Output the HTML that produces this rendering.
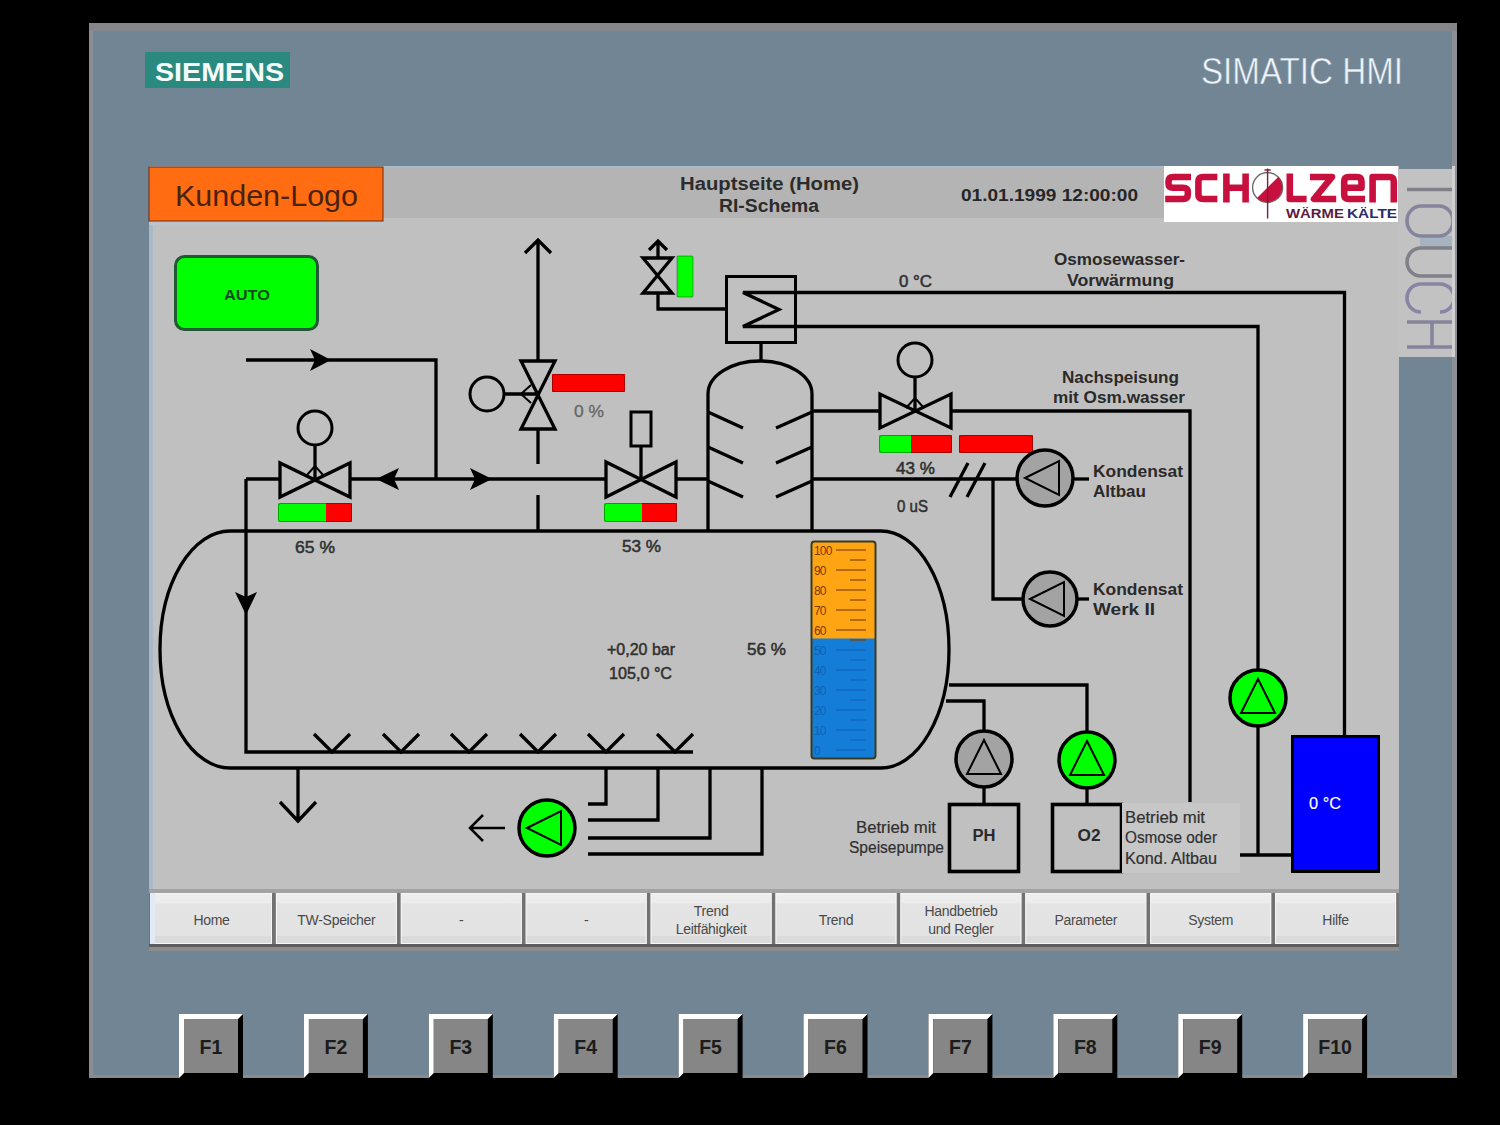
<!DOCTYPE html><html><head><meta charset="utf-8"><style>html,body{margin:0;padding:0;background:#000;width:1500px;height:1125px;overflow:hidden}svg{display:block}text{font-family:"Liberation Sans",sans-serif}</style></head><body>
<svg width="1500" height="1125" viewBox="0 0 1500 1125">
<defs><linearGradient id="btn" x1="0" y1="0" x2="0" y2="1"><stop offset="0" stop-color="#eeeeee"/><stop offset="0.2" stop-color="#ececec"/><stop offset="0.21" stop-color="#e4e4e4"/><stop offset="0.84" stop-color="#e3e3e3"/><stop offset="0.85" stop-color="#dbdbdb"/><stop offset="1" stop-color="#dadada"/></linearGradient></defs>
<rect x="0" y="0" width="1500" height="1125" fill="#000"/>
<rect x="89" y="23" width="1368" height="1055" fill="#718595"/>
<rect x="89" y="23" width="4" height="1055" fill="#8a8e92"/>
<rect x="1452" y="23" width="5" height="1055" fill="#8c9094"/>
<rect x="89" y="23" width="1368" height="8" fill="#85858c"/>
<rect x="89" y="1075" width="1368" height="3" fill="#8a8a8a"/>
<rect x="145" y="52" width="145" height="36" fill="#2b8a80"/>
<text x="155" y="81" font-size="26.5" font-weight="bold" fill="#f4fbfb" textLength="129" lengthAdjust="spacingAndGlyphs">SIEMENS</text>
<text x="1201" y="83.5" font-size="37" fill="#eef3f8" textLength="202" lengthAdjust="spacingAndGlyphs" stroke="#718595" stroke-width="0.5">SIMATIC HMI</text>
<rect x="149" y="166" width="1250" height="727" fill="#c0c0c0"/>
<rect x="149" y="218" width="4" height="675" fill="#a9b9c9"/>
<rect x="383" y="166" width="781" height="52" fill="#b4b4b4"/>
<rect x="383" y="166" width="781" height="2" fill="#a8bccc"/>
<rect x="149" y="221" width="236" height="4" fill="#b9c4cc"/>
<rect x="149" y="167" width="234" height="54" fill="#ff6c12" stroke="#6a2a10" stroke-width="1"/>
<text x="175" y="206" font-size="30" fill="#4a2212" textLength="183" lengthAdjust="spacingAndGlyphs">Kunden-Logo</text>
<text x="680" y="189.5" font-size="17.5" font-weight="bold" fill="#2c2c2c" textLength="179" lengthAdjust="spacingAndGlyphs">Hauptseite (Home)</text>
<text x="719" y="212" font-size="17.5" font-weight="bold" fill="#2c2c2c" textLength="100" lengthAdjust="spacingAndGlyphs">RI-Schema</text>
<text x="961" y="200.5" font-size="16.5" font-weight="bold" fill="#262626" textLength="177" lengthAdjust="spacingAndGlyphs">01.01.1999 12:00:00</text>
<rect x="1164" y="166" width="234" height="56" fill="#ffffff"/>
<g id="scholzen" fill="none" stroke="#c8103e" stroke-width="6.6" stroke-linejoin="round">
<path d="M1191,177 H1173 Q1168.5,177 1168.5,181.5 V183.5 Q1168.5,187.8 1173,187.8 H1183 Q1187.8,187.8 1187.8,192 V194.5 Q1187.8,199 1183,199 H1165.2"/>
<path d="M1217.4,177 H1203 Q1198.4,177 1198.4,181.5 V194.5 Q1198.4,199 1203,199 H1217.4"/>
<path d="M1226.4,173.4 V202.4 M1245.6,173.4 V202.4 M1226.4,187.8 H1245.6"/>
<path d="M1289.8,173.4 V199 H1306.6"/>
<path d="M1310,177 H1332 L1314,199 H1336.2"/>
<path d="M1344.2,187.8 H1361.5 V181.5 Q1361.5,177 1357,177 H1348.7 Q1344.2,177 1344.2,181.5 V194.5 Q1344.2,199 1348.7,199 H1365"/>
<path d="M1372.6,202.4 V177 H1389.5 Q1393.8,177 1393.8,181.5 V202.4"/>
</g>
<circle cx="1267.6" cy="187.5" r="15" fill="#fff" stroke="#6a6a6a" stroke-width="1.4"/>
<path d="M1278.2,176.9 A15,15 0 0 1 1257,198.1 Z" fill="#c8103e"/>
<path d="M1267.6,168.5 V218.5 M1264.5,170 H1270.7" stroke="#7a2035" stroke-width="1.4"/>
<text x="1286" y="218.3" font-size="13.5" font-weight="bold" fill="#5e1c3c" textLength="58" lengthAdjust="spacingAndGlyphs">WÄRME</text>
<text x="1347" y="218.3" font-size="13.5" font-weight="bold" fill="#2c2c66" textLength="50" lengthAdjust="spacingAndGlyphs">KÄLTE</text>
<rect x="1399" y="169" width="56" height="188" fill="#c2c2c2"/>
<rect x="1420" y="236" width="32" height="12" fill="#94a8bc" opacity="0.6"/>
<g fill="none" stroke="#808088" stroke-width="3.6">
<path d="M1407,189.5 H1452"/>
<path d="M1421,206 H1439 A14,15 0 0 1 1439,236 H1421 A14,15 0 0 1 1421,206 Z" stroke="#86849c"/>
<path d="M1452,248 H1421 A14,14 0 0 0 1421,276 H1452"/>
<path d="M1440,312 A14,14 0 0 0 1440,284 H1421 A14,14 0 0 0 1421,312" stroke="#8884a4"/>
<path d="M1407,322 H1452 M1407,347 H1452 M1432,322 V347" stroke="#86849c"/>
</g>
<rect x="1452" y="166" width="3" height="191" fill="#d0d0d0"/>
<rect x="149" y="889" width="1250" height="4" fill="#a2a2a2"/>
<rect x="149" y="893" width="1250" height="51" fill="#727272"/>
<rect x="149" y="944" width="1250" height="3" fill="#5c5c5c"/>
<rect x="149" y="947" width="1250" height="4" fill="#8c8c8c"/>
<rect x="151.0" y="893" width="121" height="51" fill="url(#btn)"/>
<rect x="151.5" y="893.5" width="120" height="50" fill="none" stroke="#f6f6f6" stroke-width="1"/>
<text x="211.5" y="925" font-size="14" fill="#4a4a4a" text-anchor="middle" letter-spacing="-0.3">Home</text>
<rect x="275.9" y="893" width="121" height="51" fill="url(#btn)"/>
<rect x="276.4" y="893.5" width="120" height="50" fill="none" stroke="#f6f6f6" stroke-width="1"/>
<text x="336.4" y="925" font-size="14" fill="#4a4a4a" text-anchor="middle" letter-spacing="-0.3">TW-Speicher</text>
<rect x="400.8" y="893" width="121" height="51" fill="url(#btn)"/>
<rect x="401.3" y="893.5" width="120" height="50" fill="none" stroke="#f6f6f6" stroke-width="1"/>
<text x="461.3" y="925" font-size="14" fill="#4a4a4a" text-anchor="middle" letter-spacing="-0.3">-</text>
<rect x="525.7" y="893" width="121" height="51" fill="url(#btn)"/>
<rect x="526.2" y="893.5" width="120" height="50" fill="none" stroke="#f6f6f6" stroke-width="1"/>
<text x="586.2" y="925" font-size="14" fill="#4a4a4a" text-anchor="middle" letter-spacing="-0.3">-</text>
<rect x="650.6" y="893" width="121" height="51" fill="url(#btn)"/>
<rect x="651.1" y="893.5" width="120" height="50" fill="none" stroke="#f6f6f6" stroke-width="1"/>
<text x="711.1" y="916" font-size="14" fill="#4a4a4a" text-anchor="middle" letter-spacing="-0.3">Trend</text>
<text x="711.1" y="934" font-size="14" fill="#4a4a4a" text-anchor="middle" letter-spacing="-0.3">Leitfähigkeit</text>
<rect x="775.5" y="893" width="121" height="51" fill="url(#btn)"/>
<rect x="776.0" y="893.5" width="120" height="50" fill="none" stroke="#f6f6f6" stroke-width="1"/>
<text x="836.0" y="925" font-size="14" fill="#4a4a4a" text-anchor="middle" letter-spacing="-0.3">Trend</text>
<rect x="900.4" y="893" width="121" height="51" fill="url(#btn)"/>
<rect x="900.9" y="893.5" width="120" height="50" fill="none" stroke="#f6f6f6" stroke-width="1"/>
<text x="960.9000000000001" y="916" font-size="14" fill="#4a4a4a" text-anchor="middle" letter-spacing="-0.3">Handbetrieb</text>
<text x="960.9000000000001" y="934" font-size="14" fill="#4a4a4a" text-anchor="middle" letter-spacing="-0.3">und Regler</text>
<rect x="1025.3" y="893" width="121" height="51" fill="url(#btn)"/>
<rect x="1025.8" y="893.5" width="120" height="50" fill="none" stroke="#f6f6f6" stroke-width="1"/>
<text x="1085.8000000000002" y="925" font-size="14" fill="#4a4a4a" text-anchor="middle" letter-spacing="-0.3">Parameter</text>
<rect x="1150.2" y="893" width="121" height="51" fill="url(#btn)"/>
<rect x="1150.7" y="893.5" width="120" height="50" fill="none" stroke="#f6f6f6" stroke-width="1"/>
<text x="1210.7" y="925" font-size="14" fill="#4a4a4a" text-anchor="middle" letter-spacing="-0.3">System</text>
<rect x="1275.1" y="893" width="121" height="51" fill="url(#btn)"/>
<rect x="1275.6" y="893.5" width="120" height="50" fill="none" stroke="#f6f6f6" stroke-width="1"/>
<text x="1335.6000000000001" y="925" font-size="14" fill="#4a4a4a" text-anchor="middle" letter-spacing="-0.3">Hilfe</text>
<rect x="150" y="893" width="5" height="51" fill="#e2eaf4"/>
<g transform="translate(179.0,1014)"><rect x="0" y="0" width="64" height="64" fill="#000"/><path d="M0,0 H64 L59,5 H5 V59 L0,64 Z" fill="#fff"/><rect x="5" y="5" width="54" height="54" fill="#868686"/></g>
<text x="211.0" y="1053.5" font-size="19.5" font-weight="bold" fill="#1c1c1c" text-anchor="middle">F1</text>
<g transform="translate(303.9,1014)"><rect x="0" y="0" width="64" height="64" fill="#000"/><path d="M0,0 H64 L59,5 H5 V59 L0,64 Z" fill="#fff"/><rect x="5" y="5" width="54" height="54" fill="#868686"/></g>
<text x="335.9" y="1053.5" font-size="19.5" font-weight="bold" fill="#1c1c1c" text-anchor="middle">F2</text>
<g transform="translate(428.8,1014)"><rect x="0" y="0" width="64" height="64" fill="#000"/><path d="M0,0 H64 L59,5 H5 V59 L0,64 Z" fill="#fff"/><rect x="5" y="5" width="54" height="54" fill="#868686"/></g>
<text x="460.8" y="1053.5" font-size="19.5" font-weight="bold" fill="#1c1c1c" text-anchor="middle">F3</text>
<g transform="translate(553.7,1014)"><rect x="0" y="0" width="64" height="64" fill="#000"/><path d="M0,0 H64 L59,5 H5 V59 L0,64 Z" fill="#fff"/><rect x="5" y="5" width="54" height="54" fill="#868686"/></g>
<text x="585.7" y="1053.5" font-size="19.5" font-weight="bold" fill="#1c1c1c" text-anchor="middle">F4</text>
<g transform="translate(678.6,1014)"><rect x="0" y="0" width="64" height="64" fill="#000"/><path d="M0,0 H64 L59,5 H5 V59 L0,64 Z" fill="#fff"/><rect x="5" y="5" width="54" height="54" fill="#868686"/></g>
<text x="710.6" y="1053.5" font-size="19.5" font-weight="bold" fill="#1c1c1c" text-anchor="middle">F5</text>
<g transform="translate(803.5,1014)"><rect x="0" y="0" width="64" height="64" fill="#000"/><path d="M0,0 H64 L59,5 H5 V59 L0,64 Z" fill="#fff"/><rect x="5" y="5" width="54" height="54" fill="#868686"/></g>
<text x="835.5" y="1053.5" font-size="19.5" font-weight="bold" fill="#1c1c1c" text-anchor="middle">F6</text>
<g transform="translate(928.4,1014)"><rect x="0" y="0" width="64" height="64" fill="#000"/><path d="M0,0 H64 L59,5 H5 V59 L0,64 Z" fill="#fff"/><rect x="5" y="5" width="54" height="54" fill="#868686"/></g>
<text x="960.4000000000001" y="1053.5" font-size="19.5" font-weight="bold" fill="#1c1c1c" text-anchor="middle">F7</text>
<g transform="translate(1053.3,1014)"><rect x="0" y="0" width="64" height="64" fill="#000"/><path d="M0,0 H64 L59,5 H5 V59 L0,64 Z" fill="#fff"/><rect x="5" y="5" width="54" height="54" fill="#868686"/></g>
<text x="1085.3000000000002" y="1053.5" font-size="19.5" font-weight="bold" fill="#1c1c1c" text-anchor="middle">F8</text>
<g transform="translate(1178.2,1014)"><rect x="0" y="0" width="64" height="64" fill="#000"/><path d="M0,0 H64 L59,5 H5 V59 L0,64 Z" fill="#fff"/><rect x="5" y="5" width="54" height="54" fill="#868686"/></g>
<text x="1210.2" y="1053.5" font-size="19.5" font-weight="bold" fill="#1c1c1c" text-anchor="middle">F9</text>
<g transform="translate(1303.1,1014)"><rect x="0" y="0" width="64" height="64" fill="#000"/><path d="M0,0 H64 L59,5 H5 V59 L0,64 Z" fill="#fff"/><rect x="5" y="5" width="54" height="54" fill="#868686"/></g>
<text x="1335.1000000000001" y="1053.5" font-size="19.5" font-weight="bold" fill="#1c1c1c" text-anchor="middle">F10</text>
<g stroke-linecap="butt" stroke-linejoin="miter">
<rect x="175.5" y="256.5" width="142" height="73" rx="9" fill="#00ff00" stroke="#1f5a32" stroke-width="3"/>
<text x="224" y="300" font-size="14.5" font-weight="bold" fill="#124a22" textLength="46" lengthAdjust="spacingAndGlyphs">AUTO</text>
<path d="M246,360 H436 V479" fill="none" stroke="#000" stroke-width="3.3"/>
<path d="M331,360 L310,349 L315,360 L310,371 Z" fill="#000"/>
<path d="M246,479 H280 M350,479 H606 M676,479 H708" fill="none" stroke="#000" stroke-width="3.3"/>
<path d="M280,463 L280,497 L350,463 L350,497 Z" fill="none" stroke="#000" stroke-width="3.3"/>
<circle cx="315" cy="428" r="17" fill="none" stroke="#000" stroke-width="3"/>
<path d="M315,445 V479" fill="none" stroke="#000" stroke-width="3.3"/>
<path d="M306,476 L315,466 L324,476" fill="none" stroke="#000" stroke-width="2"/>
<path d="M376,479 L399,468 L394,479 L399,490 Z" fill="#000"/>
<path d="M492,479 L470,468 L475,479 L470,490 Z" fill="#000"/>
<rect x="278" y="503" width="48" height="19" fill="#00ff00"/>
<rect x="326" y="503" width="26" height="19" fill="#ff0000"/>
<rect x="278.5" y="503.5" width="73" height="18" rx="2" fill="none" stroke="#000" stroke-opacity="0.35" stroke-width="1"/>
<text x="295" y="553" font-size="16" fill="#303030" textLength="40" lengthAdjust="spacingAndGlyphs" stroke="#303030" stroke-width="0.5">65 %</text>
<path d="M246,479 V752 H693" fill="none" stroke="#000" stroke-width="3.3"/>
<path d="M246,615 L235,592 L246,597 L257,592 Z" fill="#000"/>
<path d="M314,734 L332,752 L350,734" fill="none" stroke="#000" stroke-width="3.3"/>
<path d="M383,734 L401,752 L419,734" fill="none" stroke="#000" stroke-width="3.3"/>
<path d="M451,734 L469,752 L487,734" fill="none" stroke="#000" stroke-width="3.3"/>
<path d="M520,734 L538,752 L556,734" fill="none" stroke="#000" stroke-width="3.3"/>
<path d="M588,734 L606,752 L624,734" fill="none" stroke="#000" stroke-width="3.3"/>
<path d="M657,734 L675,752 L693,734" fill="none" stroke="#000" stroke-width="3.3"/>
<path d="M230,531 H881 A68,118.5 0 0 1 881,768 H230 A70,118.5 0 0 1 230,531 Z" fill="none" stroke="#000" stroke-width="3.3"/>
<path d="M298,768 V821 M280,802 L298,821 L316,802" fill="none" stroke="#000" stroke-width="3.3"/>
<path d="M538,240 V361 M538,429 V464 M538,495 V531 M525,253 L538,240 L551,253" fill="none" stroke="#000" stroke-width="3.3"/>
<path d="M521,361 L555,361 L521,429 L555,429 Z" fill="none" stroke="#000" stroke-width="3.3"/>
<circle cx="487" cy="394" r="17" fill="none" stroke="#000" stroke-width="3"/>
<path d="M504,394 H538" fill="none" stroke="#000" stroke-width="3.3"/>
<path d="M531,385 L521,394 L531,403" fill="none" stroke="#000" stroke-width="2"/>
<rect x="552" y="374" width="73" height="18" fill="#ff0000"/>
<rect x="552.5" y="374.5" width="72" height="17" rx="2" fill="none" stroke="#000" stroke-opacity="0.35" stroke-width="1"/>
<text x="574" y="417" font-size="16" fill="#666666" textLength="30" lengthAdjust="spacingAndGlyphs" stroke="#666666" stroke-width="0.3">0 %</text>
<path d="M606,462 L606,497 L676,462 L676,497 Z" fill="none" stroke="#000" stroke-width="3.3"/>
<rect x="631" y="412" width="20" height="34" fill="none" stroke="#000" stroke-width="3"/>
<path d="M641,446 V479" fill="none" stroke="#000" stroke-width="3.3"/>
<rect x="604" y="503" width="38" height="19" fill="#00ff00"/>
<rect x="642" y="503" width="35" height="19" fill="#ff0000"/>
<rect x="604.5" y="503.5" width="72" height="18" rx="2" fill="none" stroke="#000" stroke-opacity="0.35" stroke-width="1"/>
<text x="622" y="552" font-size="16" fill="#303030" textLength="39" lengthAdjust="spacingAndGlyphs" stroke="#303030" stroke-width="0.5">53 %</text>
<path d="M643,258 L672,258 L643,293 L672,293 Z" fill="none" stroke="#000" stroke-width="3.3"/>
<path d="M658,258 V241 M649,250 L658,241 L667,250" fill="none" stroke="#000" stroke-width="3.3"/>
<path d="M658,293 V309 H726" fill="none" stroke="#000" stroke-width="3.3"/>
<rect x="677" y="256" width="16" height="41" rx="1" fill="#00ff00" stroke="#000" stroke-opacity="0.35" stroke-width="1"/>
<rect x="726.5" y="276.5" width="69" height="66" fill="none" stroke="#000" stroke-width="3"/>
<path d="M1344.5,735 V292.5 H743 L779,309.5 L743,326.5 H1258 V670" fill="none" stroke="#000" stroke-width="3.3"/>
<path d="M761,343 V361" fill="none" stroke="#000" stroke-width="3.3"/>
<path d="M708,531 V394 A52,33 0 0 1 812,394 V531" fill="none" stroke="#000" stroke-width="3.3"/>
<path d="M708,412 L743,428 M812,412 L776,428" fill="none" stroke="#000" stroke-width="3.3"/>
<path d="M708,447 L743,463 M812,447 L776,463" fill="none" stroke="#000" stroke-width="3.3"/>
<path d="M708,481 L743,497 M812,481 L776,497" fill="none" stroke="#000" stroke-width="3.3"/>
<path d="M812,411 H880 M951,411 H1190 V802" fill="none" stroke="#000" stroke-width="3.3"/>
<path d="M880,394 L880,428 L951,394 L951,428 Z" fill="none" stroke="#000" stroke-width="3.3"/>
<circle cx="915" cy="360" r="17" fill="none" stroke="#000" stroke-width="3"/>
<path d="M915,377 V411" fill="none" stroke="#000" stroke-width="3.3"/>
<path d="M906,408 L915,398 L924,408" fill="none" stroke="#000" stroke-width="2"/>
<rect x="879" y="435" width="32" height="18" fill="#00ff00"/>
<rect x="911" y="435" width="41" height="18" fill="#ff0000"/>
<rect x="879.5" y="435.5" width="72" height="17" rx="2" fill="none" stroke="#000" stroke-opacity="0.35" stroke-width="1"/>
<rect x="959" y="435" width="74" height="18" fill="#ff0000"/>
<rect x="959.5" y="435.5" width="73" height="17" rx="2" fill="none" stroke="#000" stroke-opacity="0.35" stroke-width="1"/>
<text x="896" y="474" font-size="16" fill="#303030" textLength="39" lengthAdjust="spacingAndGlyphs" stroke="#303030" stroke-width="0.5">43 %</text>
<path d="M812,479 H1017 M950,497 L968,463 M967,497 L985,463" fill="none" stroke="#000" stroke-width="3.3"/>
<path d="M993,479 V599 H1022" fill="none" stroke="#000" stroke-width="3.3"/>
<text x="897" y="512" font-size="16" fill="#303030" textLength="31" lengthAdjust="spacingAndGlyphs" stroke="#303030" stroke-width="0.5">0 uS</text>
<circle cx="1045" cy="478" r="28" fill="#a3a3a3" stroke="#000" stroke-width="3.5"/>
<path d="M1025,478 L1059,461 L1059,495 Z" fill="none" stroke="#000" stroke-width="2"/>
<path d="M1073,479 H1089" fill="none" stroke="#000" stroke-width="3.3"/>
<text x="1093" y="476.5" font-size="16" font-weight="bold" fill="#2a2a2a" textLength="90" lengthAdjust="spacingAndGlyphs">Kondensat</text>
<text x="1093" y="496.5" font-size="16" font-weight="bold" fill="#2a2a2a" textLength="53" lengthAdjust="spacingAndGlyphs">Altbau</text>
<circle cx="1050" cy="599" r="27" fill="#a3a3a3" stroke="#000" stroke-width="3.5"/>
<path d="M1030,599 L1064,582 L1064,616 Z" fill="none" stroke="#000" stroke-width="2"/>
<path d="M1077,599 H1089" fill="none" stroke="#000" stroke-width="3.3"/>
<text x="1093" y="594.5" font-size="16" font-weight="bold" fill="#2a2a2a" textLength="90" lengthAdjust="spacingAndGlyphs">Kondensat</text>
<text x="1093" y="614.5" font-size="16" font-weight="bold" fill="#2a2a2a" textLength="62" lengthAdjust="spacingAndGlyphs">Werk II</text>
<text x="899" y="287" font-size="16" fill="#303030" textLength="33" lengthAdjust="spacingAndGlyphs" stroke="#303030" stroke-width="0.5">0 °C</text>
<text x="1054" y="265" font-size="16" font-weight="bold" fill="#2a2a2a" textLength="131" lengthAdjust="spacingAndGlyphs">Osmosewasser-</text>
<text x="1067" y="285.5" font-size="16" font-weight="bold" fill="#2a2a2a" textLength="107" lengthAdjust="spacingAndGlyphs">Vorwärmung</text>
<text x="1062" y="382.5" font-size="16" font-weight="bold" fill="#2a2a2a" textLength="117" lengthAdjust="spacingAndGlyphs">Nachspeisung</text>
<text x="1053" y="403" font-size="16" font-weight="bold" fill="#2a2a2a" textLength="132" lengthAdjust="spacingAndGlyphs">mit Osm.wasser</text>
<circle cx="1258" cy="698" r="28" fill="#00ff00" stroke="#000" stroke-width="3.5"/>
<path d="M1258,679 L1241,713 L1275,713 Z" fill="none" stroke="#000" stroke-width="2"/>
<path d="M1258,726 V855 M1240,855 H1291" fill="none" stroke="#000" stroke-width="3.3"/>
<rect x="1292.5" y="736.5" width="86" height="135" fill="#0000ff" stroke="#000" stroke-width="3"/>
<text x="1309" y="809" font-size="16" fill="#ffffff" textLength="32" lengthAdjust="spacingAndGlyphs" stroke="#ffffff" stroke-width="0.15">0 °C</text>
<path d="M946,701 H984 V731" fill="none" stroke="#000" stroke-width="3.3"/>
<circle cx="984" cy="759" r="28" fill="#a3a3a3" stroke="#000" stroke-width="3.5"/>
<path d="M984,740 L967,774 L1001,774 Z" fill="none" stroke="#000" stroke-width="2"/>
<path d="M984,787 V803" fill="none" stroke="#000" stroke-width="3.3"/>
<rect x="949.5" y="804.5" width="69" height="67" fill="none" stroke="#000" stroke-width="3.6"/>
<text x="984" y="841" font-size="16" font-weight="bold" fill="#2a2a2a" text-anchor="middle" textLength="23" lengthAdjust="spacingAndGlyphs">PH</text>
<path d="M949,685 H1087 V732" fill="none" stroke="#000" stroke-width="3.3"/>
<circle cx="1087" cy="760" r="28" fill="#00ff00" stroke="#000" stroke-width="3.5"/>
<path d="M1087,741 L1070,775 L1104,775 Z" fill="none" stroke="#000" stroke-width="2"/>
<path d="M1087,788 V803" fill="none" stroke="#000" stroke-width="3.3"/>
<rect x="1052.5" y="804.5" width="69" height="67" fill="none" stroke="#000" stroke-width="3.6"/>
<text x="1089" y="841" font-size="16" font-weight="bold" fill="#2a2a2a" text-anchor="middle" textLength="23" lengthAdjust="spacingAndGlyphs">O2</text>
<rect x="1122" y="803" width="118" height="70" fill="#c7c7c7"/>
<text x="1125" y="823" font-size="16" fill="#303030" textLength="80" lengthAdjust="spacingAndGlyphs" stroke="#303030" stroke-width="0.2">Betrieb mit</text>
<text x="1125" y="843" font-size="16" fill="#303030" textLength="92" lengthAdjust="spacingAndGlyphs" stroke="#303030" stroke-width="0.2">Osmose oder</text>
<text x="1125" y="864" font-size="16" fill="#303030" textLength="92" lengthAdjust="spacingAndGlyphs" stroke="#303030" stroke-width="0.2">Kond. Altbau</text>
<text x="856" y="833" font-size="16" fill="#303030" textLength="80" lengthAdjust="spacingAndGlyphs" stroke="#303030" stroke-width="0.2">Betrieb mit</text>
<text x="849" y="853" font-size="16" fill="#303030" textLength="95" lengthAdjust="spacingAndGlyphs" stroke="#303030" stroke-width="0.2">Speisepumpe</text>
<path d="M606,769 V804 H588 M658,769 V820 H588 M710,769 V838 H588 M762,769 V854 H588" fill="none" stroke="#000" stroke-width="3.3"/>
<circle cx="547" cy="828" r="28" fill="#00ff00" stroke="#000" stroke-width="3.5"/>
<path d="M527,828 L561,811 L561,845 Z" fill="none" stroke="#000" stroke-width="2"/>
<path d="M505,828 H470 M483,815 L470,828 L483,841" fill="none" stroke="#000" stroke-width="2.5"/>
<text x="607" y="655" font-size="16" fill="#303030" textLength="68" lengthAdjust="spacingAndGlyphs" stroke="#303030" stroke-width="0.5">+0,20 bar</text>
<text x="609" y="679" font-size="16" fill="#303030" textLength="63" lengthAdjust="spacingAndGlyphs" stroke="#303030" stroke-width="0.5">105,0 °C</text>
<text x="747" y="655" font-size="16" fill="#303030" textLength="39" lengthAdjust="spacingAndGlyphs" stroke="#303030" stroke-width="0.5">56 %</text>
<rect x="811" y="541" width="65" height="218" rx="3" fill="#147dd7"/>
<path d="M811,638.5 V544 Q811,541 814,541 H873 Q876,541 876,544 V638.5 Z" fill="#ffa514"/>
<rect x="811.5" y="541.5" width="64" height="217" rx="3" fill="none" stroke="#3a3a20" stroke-width="2"/>
<path d="M836,550 H866" fill="none" stroke="#7a3a00" stroke-width="1.1"/>
<path d="M850,560 H866" fill="none" stroke="#7a3a00" stroke-width="1.1"/>
<text x="814" y="554.5" font-size="12" fill="#7a3a00" letter-spacing="-0.8">100</text>
<path d="M836,570 H866" fill="none" stroke="#7a3a00" stroke-width="1.1"/>
<path d="M850,580 H866" fill="none" stroke="#7a3a00" stroke-width="1.1"/>
<text x="814" y="574.5" font-size="12" fill="#7a3a00" letter-spacing="-0.8">90</text>
<path d="M836,590 H866" fill="none" stroke="#7a3a00" stroke-width="1.1"/>
<path d="M850,600 H866" fill="none" stroke="#7a3a00" stroke-width="1.1"/>
<text x="814" y="594.5" font-size="12" fill="#7a3a00" letter-spacing="-0.8">80</text>
<path d="M836,610 H866" fill="none" stroke="#7a3a00" stroke-width="1.1"/>
<path d="M850,620 H866" fill="none" stroke="#7a3a00" stroke-width="1.1"/>
<text x="814" y="614.5" font-size="12" fill="#7a3a00" letter-spacing="-0.8">70</text>
<path d="M836,630 H866" fill="none" stroke="#7a3a00" stroke-width="1.1"/>
<path d="M850,640 H866" fill="none" stroke="#7a3a00" stroke-width="1.1"/>
<text x="814" y="634.5" font-size="12" fill="#7a3a00" letter-spacing="-0.8">60</text>
<path d="M836,650 H866" fill="none" stroke="#0f62b8" stroke-width="1.1"/>
<path d="M850,660 H866" fill="none" stroke="#0f62b8" stroke-width="1.1"/>
<text x="814" y="654.5" font-size="12" fill="#0f62b8" letter-spacing="-0.8">50</text>
<path d="M836,670 H866" fill="none" stroke="#0f62b8" stroke-width="1.1"/>
<path d="M850,680 H866" fill="none" stroke="#0f62b8" stroke-width="1.1"/>
<text x="814" y="674.5" font-size="12" fill="#0f62b8" letter-spacing="-0.8">40</text>
<path d="M836,690 H866" fill="none" stroke="#0f62b8" stroke-width="1.1"/>
<path d="M850,700 H866" fill="none" stroke="#0f62b8" stroke-width="1.1"/>
<text x="814" y="694.5" font-size="12" fill="#0f62b8" letter-spacing="-0.8">30</text>
<path d="M836,710 H866" fill="none" stroke="#0f62b8" stroke-width="1.1"/>
<path d="M850,720 H866" fill="none" stroke="#0f62b8" stroke-width="1.1"/>
<text x="814" y="714.5" font-size="12" fill="#0f62b8" letter-spacing="-0.8">20</text>
<path d="M836,730 H866" fill="none" stroke="#0f62b8" stroke-width="1.1"/>
<path d="M850,740 H866" fill="none" stroke="#0f62b8" stroke-width="1.1"/>
<text x="814" y="734.5" font-size="12" fill="#0f62b8" letter-spacing="-0.8">10</text>
<path d="M836,750 H866" fill="none" stroke="#0f62b8" stroke-width="1.1"/>
<text x="814" y="754.5" font-size="12" fill="#0f62b8" letter-spacing="-0.8">0</text>
</g>
</svg></body></html>
